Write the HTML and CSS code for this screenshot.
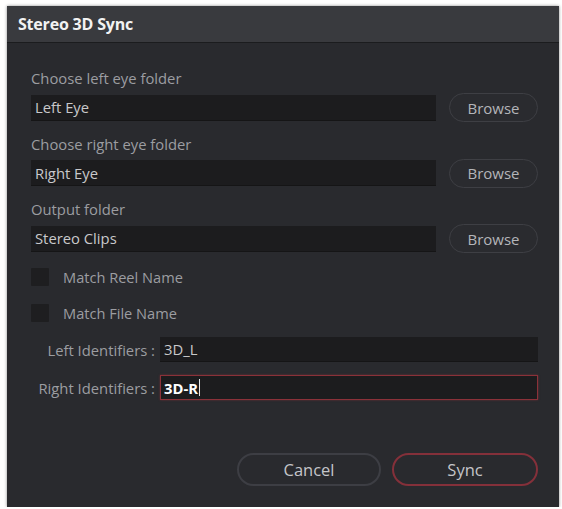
FILE: index.html
```html
<!DOCTYPE html>
<html lang="en">
<head>
<meta charset="utf-8">
<title>Stereo 3D Sync</title>
<link rel="stylesheet" href="styles.css">
</head>
<body>
<div class="dialog">
  <div class="titlebar">Stereo 3D Sync</div>
  <div class="content">
    <div class="group">
      <div class="label">Choose left eye folder</div>
      <div class="row">
        <div class="field">Left Eye</div>
        <button class="browse">Browse</button>
      </div>
    </div>
    <div class="group">
      <div class="label">Choose right eye folder</div>
      <div class="row">
        <div class="field">Right Eye</div>
        <button class="browse">Browse</button>
      </div>
    </div>
    <div class="group">
      <div class="label">Output folder</div>
      <div class="row">
        <div class="field">Stereo Clips</div>
        <button class="browse">Browse</button>
      </div>
    </div>

    <div class="checks">
      <label class="check"><span class="box"></span>Match Reel Name</label>
      <label class="check"><span class="box"></span>Match File Name</label>
    </div>

    <div class="idents">
      <div class="ident">
        <span class="ident-label">Left Identifiers :</span>
        <div class="field">3D_L</div>
      </div>
      <div class="ident">
        <span class="ident-label">Right Identifiers :</span>
        <div class="field focused"><span class="typed">3D-R</span><span class="caret"></span></div>
      </div>
    </div>

    <div class="actions">
      <button class="btn cancel">Cancel</button>
      <button class="btn sync">Sync</button>
    </div>
  </div>
</div>
</body>
</html>
```
FILE: styles.css
```css
* {
  box-sizing: border-box;
}

body {
  margin: 0;
  background: #ffffff;
  font-family: "Open Sans", "Noto Sans", sans-serif;
}

.dialog {
  margin: 6px 0 0 7px;
  width: 552px;
  height: 501px;
  background: #292a2e;
  display: flex;
  flex-direction: column;
  box-shadow: 0 0 3px rgba(0, 0, 0, 0.45);
}

.titlebar {
  height: 37px;
  padding-left: 11px;
  display: flex;
  align-items: center;
  background: #393a3e;
  border-bottom: 1px solid #1b1c1e;
  color: #f2f2f2;
  font-weight: 700;
  font-size: 16px;
  letter-spacing: -0.2px;
}

.content {
  flex: 1;
  display: flex;
  flex-direction: column;
  padding: 26px 21px 21px 24px;
}

.group + .group {
  margin-top: 12.5px;
}

.label {
  height: 18px;
  line-height: 18px;
  font-size: 14.8px;
  color: #9c9da1;
  margin-bottom: 6px;
}

.row {
  display: flex;
  align-items: center;
  gap: 13px;
}

.field {
  flex: 1;
  height: 26px;
  padding-left: 4px;
  display: flex;
  align-items: center;
  background: #1c1c1e;
  border-bottom: 1px solid #151516;
  color: #c9c9cb;
  font-size: 14.8px;
}

.browse {
  width: 89px;
  height: 29px;
  border-radius: 15px;
  border: 1.5px solid #3e3f44;
  background: #2a2b2f;
  color: #b4b5b9;
  font-family: inherit;
  font-size: 15px;
  padding: 0;
}

.checks {
  margin-top: 15px;
  display: flex;
  flex-direction: column;
  gap: 18px;
}

.check {
  display: flex;
  align-items: center;
  gap: 14px;
  height: 18px;
  font-size: 14.6px;
  color: #9c9da1;
}

.box {
  width: 18px;
  height: 18px;
  background: #1e1e20;
  border-radius: 1px;
}

.idents {
  margin-top: 15px;
  display: flex;
  flex-direction: column;
  gap: 13px;
}

.ident {
  display: flex;
  align-items: center;
  gap: 5px;
}

.ident-label {
  width: 124px;
  text-align: right;
  font-size: 14.8px;
  color: #9c9da1;
  white-space: nowrap;
}

.ident .field {
  height: 25px;
}

.field.focused {
  border: 1px solid #8b3139;
  box-shadow: 0 0 2px rgba(170, 50, 60, 0.5);
  padding-left: 3px;
}

.typed {
  color: #ffffff;
  font-weight: 700;
}

.caret {
  width: 1px;
  height: 17px;
  background: #e8e8e8;
  margin-left: 1px;
}

.actions {
  margin-top: auto;
  display: flex;
  justify-content: flex-end;
  gap: 11px;
}

.btn {
  height: 33px;
  border-radius: 17px;
  background: #292a2e;
  color: #c4c5c9;
  font-family: inherit;
  font-size: 16.5px;
  padding: 0;
}

.cancel {
  width: 144px;
  border: 2px solid #3d3e44;
}

.sync {
  width: 146px;
  border: 2px solid #84303a;
}
```
